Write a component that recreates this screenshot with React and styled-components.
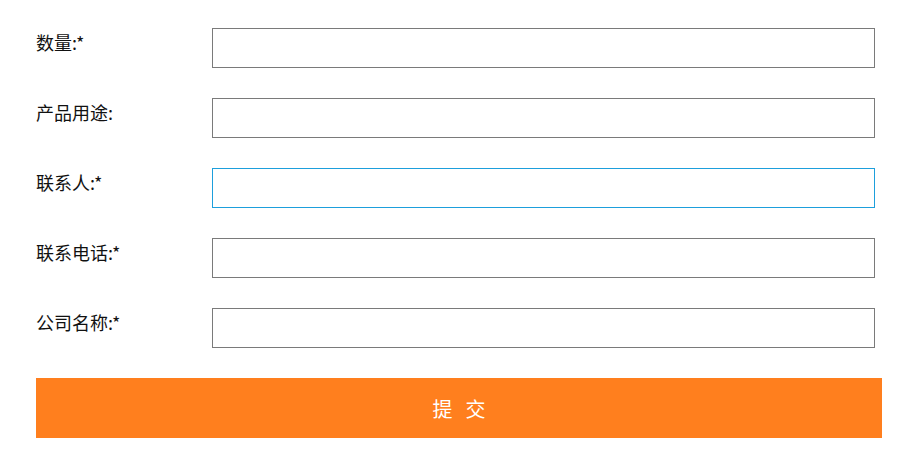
import styled, { createGlobalStyle } from "styled-components";

const GlobalStyle = createGlobalStyle`
  body {
    margin: 0;
    background: #fff;
    font-family: "Microsoft YaHei", "Noto Sans CJK SC", "Noto Sans", sans-serif;
  }
`;

const fields = [
  { label: "数量:*" },
  { label: "产品用途:" },
  { label: "联系人:*", active: true },
  { label: "联系电话:*" },
  { label: "公司名称:*" },
];

export default function App() {
  return (
    <>
      <GlobalStyle />
      <Form onSubmit={(e) => e.preventDefault()}>
        {fields.map((f) => (
          <Row key={f.label}>
            <Label>{f.label}</Label>
            <Input type="text" $active={f.active} />
          </Row>
        ))}
        <Submit type="submit">提交</Submit>
      </Form>
    </>
  );
}

const Form = styled.form`
  display: flex;
  flex-direction: column;
  gap: 30px;
  padding: 28px 0 0 36px;
  width: 846px;
`;

const Row = styled.div`
  display: grid;
  grid-template-columns: 176px 663px;
  align-items: start;
`;

const Label = styled.label`
  font-size: 18px;
  line-height: 28px;
  color: #111;
`;

const Input = styled.input`
  box-sizing: border-box;
  height: 40px;
  width: 663px;
  margin: 0;
  padding: 0 10px;
  border: 1px solid ${(p) => (p.$active ? "#1d9fdc" : "#7a7a7a")};
  border-radius: 0;
  outline: none;
  font-size: 16px;
  background: #fff;
`;

const Submit = styled.button`
  box-sizing: border-box;
  width: 846px;
  height: 60px;
  border: none;
  background: #ff7f1e;
  color: #fff;
  font-family: "Noto Sans CJK SC", sans-serif;
  font-size: 20px;
  letter-spacing: 13px;
  text-indent: 13px;
  cursor: pointer;
`;
